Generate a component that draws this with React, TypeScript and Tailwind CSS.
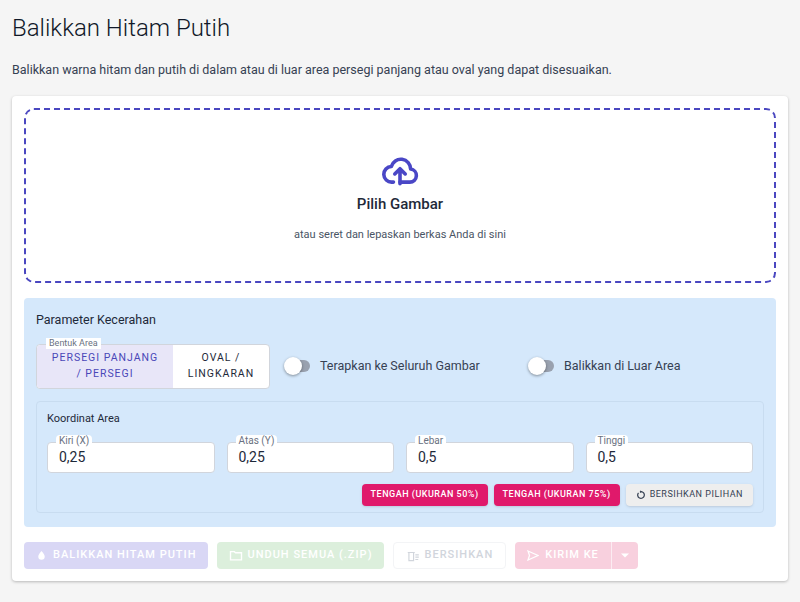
import React from "react";

const Field = ({ label, value }: { label: string; value: string }) => (
  <div className="relative flex-1">
    <span className="absolute -top-[7px] left-[9px] bg-white px-[3px] text-[10px] leading-[12px] text-gray-500 rounded-sm">{label}</span>
    <div className="h-[31px] rounded border border-gray-300 bg-white px-[11px] flex items-center text-[14px] text-gray-800">{value}</div>
  </div>
);

const Toggle = ({ label }: { label: string }) => (
  <div className="flex items-center gap-[8px]">
    <div className="relative w-[28px] h-[12px]">
      <div className="absolute inset-x-[2px] inset-y-0 rounded-full bg-gray-400"></div>
      <div className="absolute left-0 -top-[3px] w-[18px] h-[18px] rounded-full bg-white shadow-[0_1px_3px_rgba(0,0,0,0.4)]"></div>
    </div>
    <span className="text-[12.5px] text-gray-700">{label}</span>
  </div>
);

export default function App() {
  return (
    <div className="min-h-[602px] bg-[#f5f5f5] px-[12px] pt-[14px] pb-[12px]" style={{ fontFamily: "Roboto, 'Liberation Sans', sans-serif" }}>
      <h1 className="text-[24px] font-light text-gray-900 leading-[28px]">Balikkan Hitam Putih</h1>
      <p className="mt-[19px] text-[12.5px] text-gray-700">Balikkan warna hitam dan putih di dalam atau di luar area persegi panjang atau oval yang dapat disesuaikan.</p>
      <div className="mt-[16px] bg-white rounded shadow-[0_1px_3px_rgba(0,0,0,0.25)] p-[12px]">
        <div className="h-[175px] rounded-[10px] border-2 border-dashed border-[#4a47c0] flex flex-col items-center justify-center">
          <svg width="44" height="36" viewBox="0 0 24 22" fill="none" stroke="#4a47c6" strokeWidth="2.2" strokeLinecap="round" strokeLinejoin="round" className="mt-[4px]">
            <path d="M12 19h6a4 4 0 0 0 .5-7.97A6 6 0 0 0 6.7 9.5 4.5 4.5 0 0 0 7 19h1" />
            <path d="M12 20v-9M8.8 14l3.2-3.2 3.2 3.2" />
          </svg>
          <div className="mt-[6px] text-[15px] font-medium text-gray-800">Pilih Gambar</div>
          <div className="mt-[12px] text-[11px] text-gray-600">atau seret dan lepaskan berkas Anda di sini</div>
        </div>
        <div className="mt-[15px] bg-[#d5e8fb] rounded px-[12px] pt-[13px] pb-[14px]">
          <div className="text-[12.5px] text-gray-800">Parameter Kecerahan</div>
          <div className="mt-[14px] flex items-center">
            <div className="relative flex w-[234px] h-[45px] rounded border border-gray-300 bg-white text-[10.5px] tracking-[1px] font-medium">
              <span className="absolute -top-[7px] left-[9px] bg-white px-[3px] text-[9px] leading-[11px] tracking-normal font-normal text-gray-500">Bentuk Area</span>
              <div className="w-[136px] flex items-center justify-center text-center leading-[16px] bg-[#e8e6f8] text-[#4a47b8] rounded-l font-normal">PERSEGI PANJANG<br />/ PERSEGI</div>
              <div className="flex-1 flex items-center justify-center text-center leading-[16px] text-gray-800 font-normal">OVAL /<br />LINGKARAN</div>
            </div>
            <div className="ml-[14px] w-[244px]"><Toggle label="Terapkan ke Seluruh Gambar" /></div>
            <Toggle label="Balikkan di Luar Area" />
          </div>
          <div className="mt-[12px] border border-[#c8dcf0] rounded px-[10px] pt-[9px] pb-[6px]">
            <div className="text-[11px] text-gray-800">Koordinat Area</div>
            <div className="mt-[15px] flex gap-[12px]">
              <Field label="Kiri (X)" value="0,25" />
              <Field label="Atas (Y)" value="0,25" />
              <Field label="Lebar" value="0,5" />
              <Field label="Tinggi" value="0,5" />
            </div>
            <div className="mt-[11px] flex justify-end gap-[6px] text-[9px] font-medium tracking-[0.5px]">
              <button className="h-[22px] px-[9px] rounded bg-[#e0196b] text-white shadow">TENGAH (UKURAN 50%)</button>
              <button className="h-[22px] px-[9px] rounded bg-[#e0196b] text-white shadow">TENGAH (UKURAN 75%)</button>
              <button className="h-[22px] px-[10px] rounded bg-[#eeeeee] text-gray-700 shadow flex items-center gap-[4px] font-normal">
                <svg width="10" height="10" viewBox="0 0 24 24" fill="none" stroke="currentColor" strokeWidth="3"><path d="M12 4a8 8 0 1 1-6 2.7" /><path d="M10 2l2 2-2 2" /></svg>
                BERSIHKAN PILIHAN
              </button>
            </div>
          </div>
        </div>
        <div className="mt-[15px] flex gap-[9px] text-[11px] font-medium tracking-[1px] text-white">
          <button className="h-[27px] px-[12px] rounded bg-[#d9d7f5] flex items-center gap-[6px]">
            <svg width="11" height="11" viewBox="0 0 24 24" fill="white"><path d="M12 2C8 7 5 10.5 5 14a7 7 0 0 0 14 0c0-3.5-3-7-7-12z" /></svg>
            BALIKKAN HITAM PUTIH
          </button>
          <button className="h-[27px] px-[12px] rounded bg-[#dcefdc] flex items-center gap-[4px]">
            <svg width="14" height="11" viewBox="0 0 24 20" fill="none" stroke="white" strokeWidth="2.5"><path d="M2 3h7l2 2h11v13H2z" /></svg>
            UNDUH SEMUA (.ZIP)
          </button>
          <button className="h-[27px] px-[12px] rounded bg-white border border-gray-100 text-gray-300 flex items-center gap-[4px]">
            <svg width="14" height="12" viewBox="0 0 24 20" fill="none" stroke="currentColor" strokeWidth="2"><path d="M3 4h12M5 4v14h8V4M16 8h6M16 12h6M16 16h5" /></svg>
            BERSIHKAN
          </button>
          <div className="h-[27px] rounded bg-[#f8d0de] flex items-center">
            <div className="px-[12px] flex items-center gap-[6px]">
              <svg width="12" height="11" viewBox="0 0 24 22" fill="none" stroke="white" strokeWidth="2.5"><path d="M2 2l20 9-20 9 3-9z" /></svg>
              KIRIM KE
            </div>
            <div className="h-full border-l border-white/60 w-[27px] flex items-center justify-center">
              <svg width="8" height="5" viewBox="0 0 10 5" fill="white"><path d="M0 0h10L5 5z" /></svg>
            </div>
          </div>
        </div>
      </div>
    </div>
  );
}
